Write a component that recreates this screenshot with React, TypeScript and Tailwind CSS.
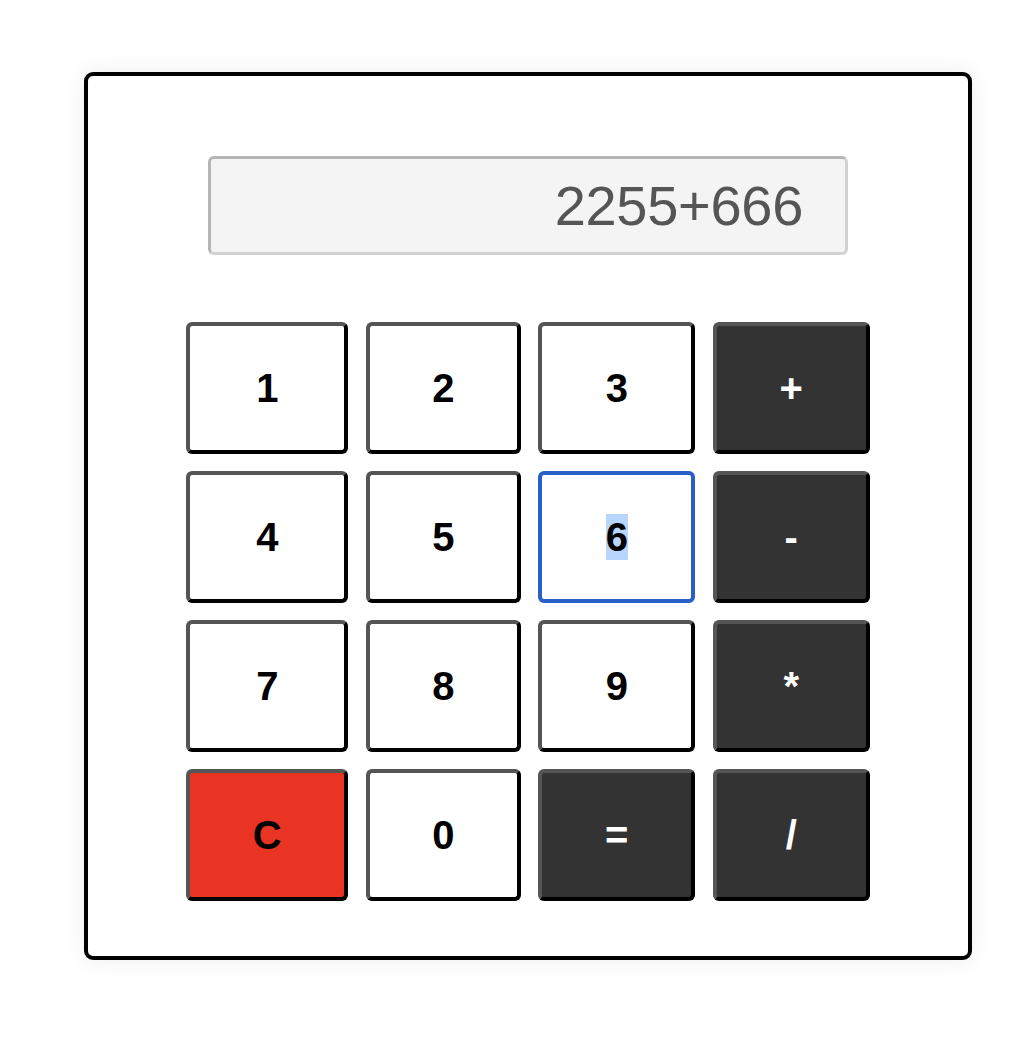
import React from "react";

type Key = { label: string; kind: "num" | "op" | "clear"; focused?: boolean };

const keys: Key[] = [
  { label: "1", kind: "num" },
  { label: "2", kind: "num" },
  { label: "3", kind: "num" },
  { label: "+", kind: "op" },
  { label: "4", kind: "num" },
  { label: "5", kind: "num" },
  { label: "6", kind: "num", focused: true },
  { label: "-", kind: "op" },
  { label: "7", kind: "num" },
  { label: "8", kind: "num" },
  { label: "9", kind: "num" },
  { label: "*", kind: "op" },
  { label: "C", kind: "clear" },
  { label: "0", kind: "num" },
  { label: "=", kind: "op" },
  { label: "/", kind: "op" },
];

function keyClasses(k: Key) {
  const base =
    "h-[132px] flex items-center justify-center rounded-[6px] border-4 text-[40px] font-bold leading-none";
  if (k.focused) {
    return `${base} bg-white text-black border-[#2a5fc9]`;
  }
  const edges =
    "border-t-[#555555] border-l-[#555555] border-b-black border-r-black";
  if (k.kind === "op") return `${base} ${edges} bg-[#333333] text-white`;
  if (k.kind === "clear") return `${base} ${edges} bg-[#e93424] text-black`;
  return `${base} ${edges} bg-white text-black`;
}

export default function App() {
  return (
    <div
      className="min-h-[1042px] bg-white pt-[72px] pl-[84px]"
      style={{ fontFamily: '"Liberation Sans", Arial, sans-serif' }}
    >
      <div className="w-[888px] h-[888px] rounded-[9px] border-4 border-black bg-white shadow-[0_0_24px_rgba(0,0,0,0.07)] flex flex-col items-center pt-[80px]">
        {/* Display */}
        <div className="w-[640px] h-[99px] rounded-[6px] border-[3px] border-t-[#b5b5b5] border-l-[#b5b5b5] border-b-[#d2d2d2] border-r-[#d2d2d2] bg-[#f4f4f4] flex items-center justify-end pr-[42px]">
          <span className="text-[56px] text-[#555555] leading-none tracking-[-0.3px]">2255+666</span>
        </div>

        {/* Keypad */}
        <div className="mt-[67px] grid grid-cols-[162px_155px_157px_157px] gap-x-[17.5px] gap-y-[17px]">
          {keys.map((k) => (
            <button key={k.label} className={keyClasses(k)}>
              {k.focused ? (
                <span className="bg-[#b8d6fb] leading-[46px]">{k.label}</span>
              ) : (
                k.label
              )}
            </button>
          ))}
        </div>
      </div>
    </div>
  );
}
